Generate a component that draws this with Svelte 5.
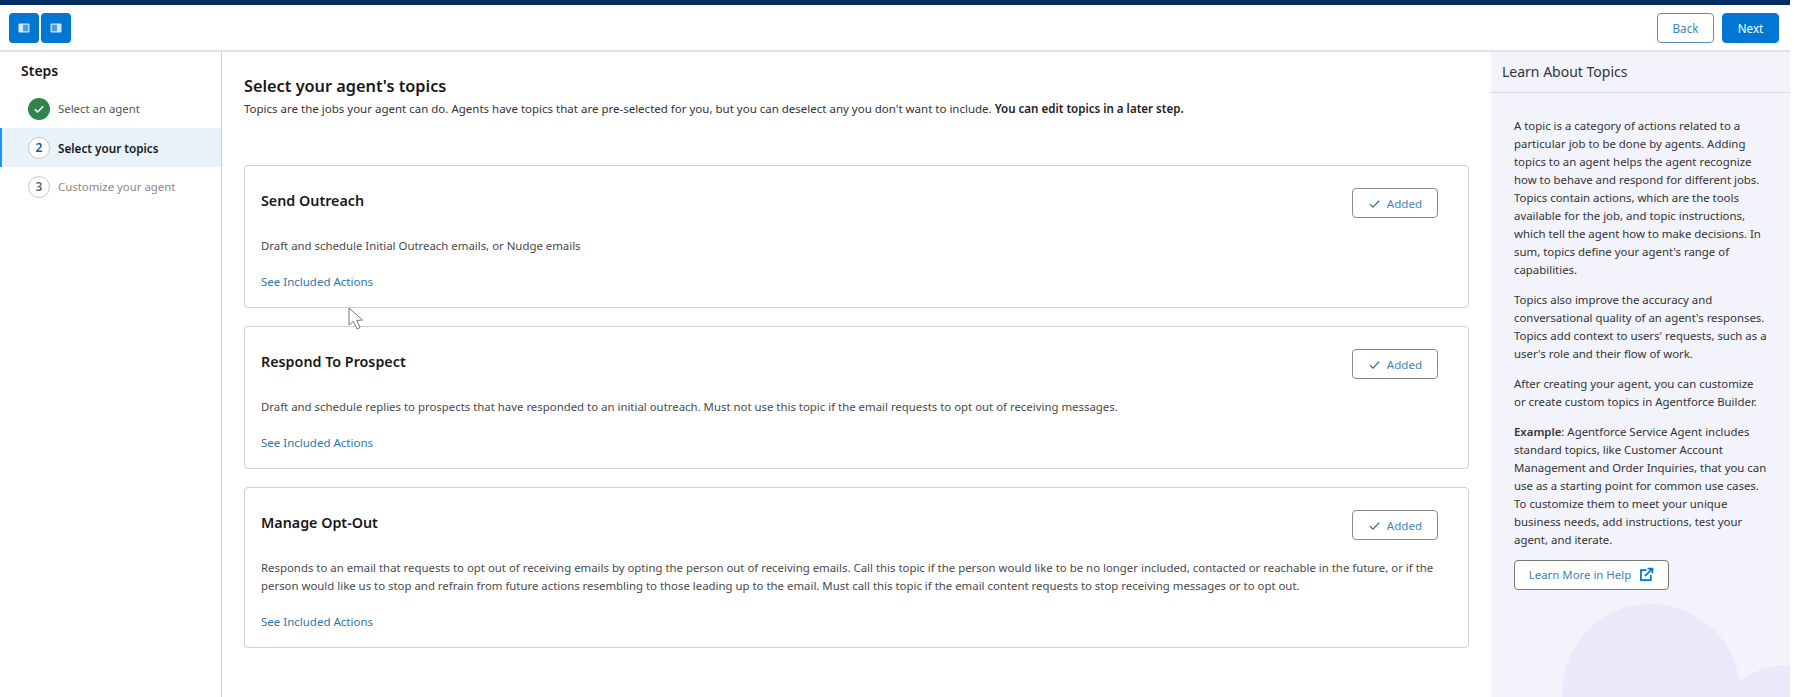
<script>
  const steps = [
    { n: 'check', label: 'Select an agent', cls: 'done' },
    { n: '2', label: 'Select your topics', cls: 'active' },
    { n: '3', label: 'Customize your agent', cls: 'todo' }
  ];
  const topics = [
    { title: 'Send Outreach', lines: ['Draft and schedule Initial Outreach emails, or Nudge emails'] },
    { title: 'Respond To Prospect', lines: ['Draft and schedule replies to prospects that have responded to an initial outreach. Must not use this topic if the email requests to opt out of receiving messages.'] },
    { title: 'Manage Opt-Out', lines: ['Responds to an email that requests to opt out of receiving emails by opting the person out of receiving emails. Call this topic if the person would like to be no longer included, contacted or reachable in the future, or if the', 'person would like us to stop and refrain from future actions resembling to those leading up to the email. Must call this topic if the email content requests to stop receiving messages or to opt out.'] }
  ];
</script>

<div class="page">
  <div class="strip"></div>
  <header class="toolbar">
    <div class="group">
      <button class="icon-btn" aria-label="Toggle left panel">
        <svg viewBox="0 0 14 14" width="14" height="14"><rect x="1.5" y="2.5" width="11" height="9" rx="1" fill="#d6e9fb"/><rect x="6" y="3.7" width="5.3" height="6.6" fill="#4a9fe4"/></svg>
      </button>
      <button class="icon-btn" aria-label="Toggle right panel">
        <svg viewBox="0 0 14 14" width="14" height="14"><rect x="1.5" y="2.5" width="11" height="9" rx="1" fill="#d6e9fb"/><rect x="2.7" y="3.7" width="5.3" height="6.6" fill="#4a9fe4"/></svg>
      </button>
    </div>
    <div class="group nav">
      <button class="btn back">Back</button>
      <button class="btn next">Next</button>
    </div>
  </header>
  <div class="body">
    <aside class="steps">
      <h2>Steps</h2>
      <ol>
        {#each steps as s}
          <li class={s.cls}>
            <span class="badge">
              {#if s.n === 'check'}
                <svg viewBox="0 0 14 14" width="14" height="14"><path d="M2.8 7.4 5.7 10 11.2 4.2" fill="none" stroke="#fff" stroke-width="1.6"/></svg>
              {:else}{s.n}{/if}
            </span>
            <span>{s.label}</span>
          </li>
        {/each}
      </ol>
    </aside>
    <main class="main">
      <h1>Select your agent's topics</h1>
      <p class="intro">Topics are the jobs your agent can do. Agents have topics that are pre-selected for you, but you can deselect any you don't want to include. <b>You can edit topics in a later step.</b></p>
      <div class="cards">
        {#each topics as t}
          <section class="card">
            <div class="card-head">
              <h3>{t.title}</h3>
              <button class="added">
                <svg viewBox="0 0 14 14" width="13" height="13"><path d="M2 7.6 5.3 11 12 4" fill="none" stroke="#2e6f9f" stroke-width="1.3"/></svg>
                Added
              </button>
            </div>
            <div class="desc">{#each t.lines as l}<div>{l}</div>{/each}</div>
            <a href="#top" class="link">See Included Actions</a>
          </section>
        {/each}
      </div>
      <svg class="cursor" viewBox="0 0 18 26" width="18" height="26"><path d="M1 1 1 18 5.5 14.5 9 22 12 20.5 8.8 13.5 14.5 13Z" fill="#fff" stroke="#777" stroke-width="1"/></svg>
    </main>
    <aside class="learn">
      <div class="learn-head">Learn About Topics</div>
      <div class="learn-body">
        <p>A topic is a category of actions related to a particular job to be done by agents. Adding topics to an agent helps the agent recognize how to behave and respond for different jobs. Topics contain actions, which are the tools available for the job, and topic instructions, which tell the agent how to make decisions. In sum, topics define your agent's range of capabilities.</p>
        <p>Topics also improve the accuracy and conversational quality of an agent's responses. Topics add context to users' requests, such as a user's role and their flow of work.</p>
        <p>After creating your agent, you can customize or create custom topics in Agentforce Builder.</p>
        <p class="last"><b>Example</b>: Agentforce Service Agent includes standard topics, like Customer Account Management and Order Inquiries, that you can use as a starting point for common use cases. To customize them to meet your unique business needs, add instructions, test your agent, and iterate.</p>
        <button class="help">Learn More in Help
          <svg viewBox="0 0 14 14" width="15" height="15"><path d="M7 3H1.8V12.2H11V7.5" fill="none" stroke="#0176d3" stroke-width="1.6"/><path d="M5.5 8.5 12 2M8 1.5H12.5V6" fill="none" stroke="#0176d3" stroke-width="1.6"/></svg>
        </button>
      </div>
      <div class="blob one"></div>
      <div class="blob two"></div>
    </aside>
  </div>
</div>

<style>
  :global(body) { margin: 0; background: #fff; }
  .page {
    width: 1790px; height: 697px; overflow: hidden; display: flex; flex-direction: column;
    font-family: "Noto Sans", "Open Sans", sans-serif; font-size: 11.4px; color: #444;
  }
  .strip { height: 5px; background: #032d60; flex: none; }
  .toolbar {
    height: 47px; flex: none; box-sizing: border-box; display: flex; justify-content: space-between;
    align-items: center; padding: 1px 11px 0 9px; border-bottom: 2px solid #e2e2e2; background: #fff;
  }
  .group { display: flex; gap: 2px; }
  .nav { gap: 8px; }
  button { font-family: inherit; cursor: pointer; }
  .icon-btn {
    width: 30px; height: 30px; padding: 0; border: 0; border-radius: 4px; background: #0176d3;
    display: flex; align-items: center; justify-content: center;
  }
  .btn { width: 57px; height: 30px; border-radius: 4px; font-size: 11.7px; padding: 0; }
  .back { background: #fff; border: 1px solid #5d8cae; color: #3f86bd; }
  .next { background: #0176d3; border: 1px solid #0176d3; color: #fff; }
  .body { flex: 1; display: flex; min-height: 0; }
  .steps { width: 222px; flex: none; box-sizing: border-box; border-right: 1px solid #d0d0d0; padding-top: 9px; }
  .steps h2 { margin: 0 0 0 21px; font-size: 14px; font-weight: 600; line-height: 20px; color: #181818; }
  ol { list-style: none; margin: 8px 0 0; padding: 0; }
  li { height: 39px; display: flex; align-items: center; gap: 8px; padding-left: 28px; box-sizing: border-box; }
  .badge {
    width: 22px; height: 22px; box-sizing: border-box; border-radius: 50%; display: flex;
    align-items: center; justify-content: center; font-weight: 600; font-size: 12px; flex: none;
  }
  .done { color: #555; }
  .done .badge { background: #2e844a; }
  .active { background: #e8f2fb; color: #181818; font-weight: 600; font-size: 11.7px; box-shadow: inset 2px 0 0 #1b96ff; }
  .active .badge { background: #fff; border: 1px solid #c9c9c9; color: #0b5cab; }
  .todo { color: #8a8a8a; }
  .todo .badge { background: #fff; border: 1px solid #c9c9c9; color: #666; }
  .main { flex: 1; min-width: 0; padding: 0 22px; position: relative; }
  h1 { margin: 23px 0 3px; font-size: 16.3px; font-weight: 600; line-height: 22px; color: #181818; }
  .intro { margin: 0 0 1px; line-height: 18px; color: #333; white-space: nowrap; font-size: 11.5px; }
  .intro b { font-weight: 600; color: #222; font-size: 11.55px; }
  .cards { margin-top: 47px; display: flex; flex-direction: column; gap: 18px; }
  .card { border: 1px solid #cfcfcf; border-radius: 4px; padding: 22px 16px 16px; }
  .card-head { display: flex; justify-content: space-between; align-items: center; height: 30px; padding-right: 14px; }
  h3 { margin: 0 0 6px; font-size: 14.3px; font-weight: 600; color: #181818; }
  .added {
    width: 86px; height: 30px; background: #fff; border: 1px solid #8a8a8a; border-radius: 4px;
    color: #3f86bd; font-size: 11.6px; display: flex; align-items: center; justify-content: center; gap: 6px; padding: 0;
  }
  .desc { margin-top: 19px; line-height: 18px; color: #4a4a4a; white-space: nowrap; }
  .link { display: block; margin-top: 18px; line-height: 18px; font-size: 11.5px; color: #2e76a8; text-decoration: none; }
  .cursor { position: absolute; left: 126px; top: 255px; }
  .learn { width: 299px; flex: none; position: relative; overflow: hidden; background: #f2f3fb; color: #333; }
  .learn-head { height: 41px; box-sizing: border-box; border-bottom: 1px solid #d8d8e0; padding: 0 11px; line-height: 40px; font-size: 14px; }
  .learn-body { padding: 24px 22px 0 23px; position: relative; z-index: 1; }
  .learn-body p { margin: 0 0 11.9px; line-height: 18px; }
  .learn-body p.last { margin-bottom: 11px; }
  .learn-body b { font-weight: 600; }
  .help {
    width: 155px; height: 30px; background: #fff; border: 1px solid #777; border-radius: 4px; color: #3f7fb5;
    font-size: 11.4px; display: flex; align-items: center; justify-content: center; gap: 8px; padding: 0;
  }
  .blob { position: absolute; background: #ebe8f9; border-radius: 50%; }
  .one { left: 71px; top: 552px; width: 178px; height: 178px; }
  .two { left: 230px; top: 613px; width: 140px; height: 100px; }
</style>
